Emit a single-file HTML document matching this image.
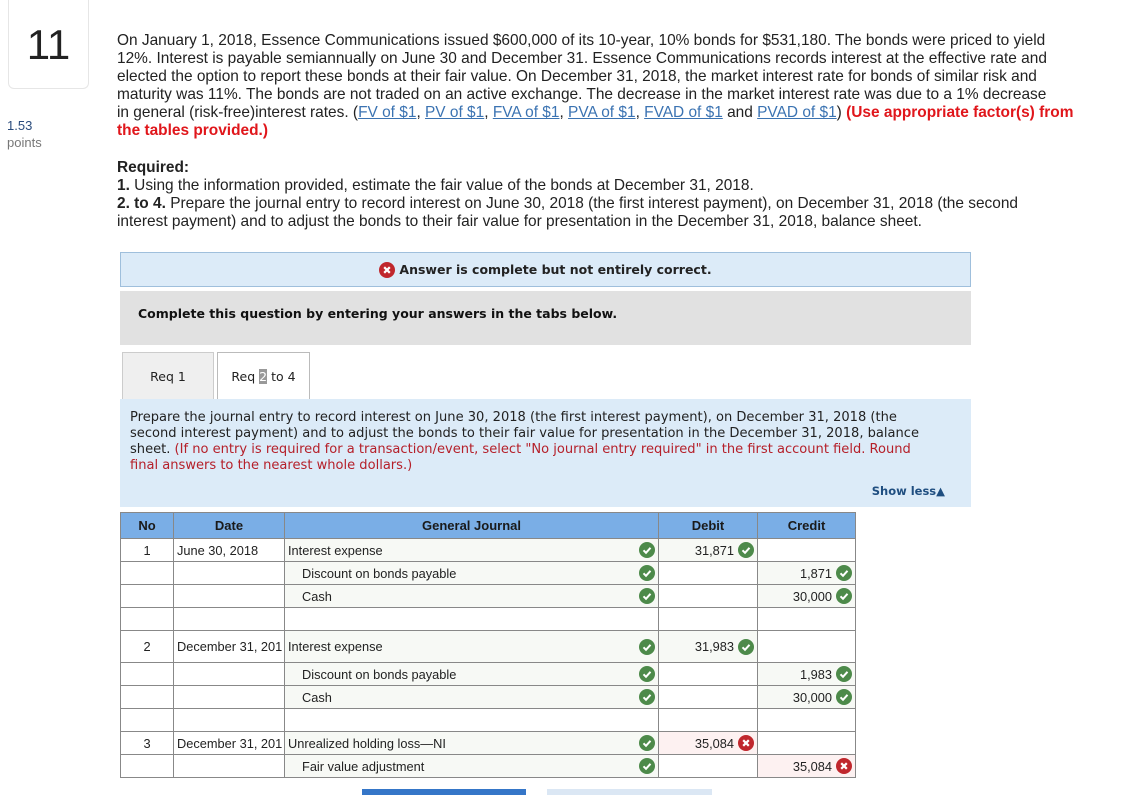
<!DOCTYPE html>
<html><head><meta charset="utf-8"><style>
*{margin:0;padding:0;box-sizing:border-box}
body{width:1145px;height:793px;background:#fff;position:relative;overflow:hidden;font-family:"Liberation Sans",Arial,sans-serif;color:#222}
.abs{position:absolute}
svg{display:block}
.qnum{left:8px;top:0;width:81px;height:89px;border:1px solid #e6e6e6;border-top:none;border-radius:0 0 6px 6px;font-size:42px;text-align:center;line-height:89px;color:#222}
.pts{left:7px;top:117px;font-size:13px;color:#2a4b7c;line-height:17px}
.pts span{color:#777;display:block}
.q{left:117px;top:32px;font-size:15.45px;line-height:18px;white-space:nowrap;color:#222}
.q a{color:#3b73b2;text-decoration:underline}
.red{color:#e0161b;font-weight:bold}
.v{font-family:"DejaVu Sans",Verdana,sans-serif}
.ans{left:120px;top:252px;width:851px;height:35px;background:#dcebf8;border:1px solid #9fbfdc;font-size:12.5px;font-weight:bold;color:#222;display:flex;align-items:center;justify-content:center;gap:4px}
.xi{display:inline-block;width:16px;height:16px;border-radius:50%;background:#c0272d;flex:none}
.ci{display:inline-block;width:16px;height:16px;border-radius:50%;background:#4d8a4a;flex:none}
.gray{left:120px;top:291px;width:851px;height:54px;background:#e1e1e1;font-size:12.5px;font-weight:bold;padding:15px 0 0 18px;color:#111}
.tab{top:352px;height:48px;font-size:12.5px;text-align:center;line-height:48px;color:#222}
.blue{left:120px;top:399px;width:851px;height:108px;background:#dcebf8;font-size:13.05px;line-height:16px;padding:11px 0 0 10px;color:#222;white-space:nowrap}
.blue .r{color:#b5202a}
table{position:absolute;left:120px;top:512px;width:735px;border-collapse:collapse;font-size:12.8px;color:#222;table-layout:fixed}
td,th{border:1px solid #888;padding:0 3px;white-space:nowrap;overflow:hidden}
th{background:#7aaee6;font-weight:bold;height:26px;color:#1a1a1a;font-size:13px}
td{height:23px;background:#fff}
td.c{text-align:center}
td.g{background:#f7f9f5}
td.e{background:#fdf1f1}
.f{display:flex;align-items:center;justify-content:space-between}
.nr{display:flex;align-items:center;justify-content:flex-end;gap:4px}
.ind{padding-left:17px}
</style></head><body>
<div class="abs qnum">11</div>
<div class="abs pts">1.53<span>points</span></div>
<div class="abs q">On January 1, 2018, Essence Communications issued $600,000 of its 10-year, 10% bonds for $531,180. The bonds were priced to yield<br>12%. Interest is payable semiannually on June 30 and December 31. Essence Communications records interest at the effective rate and<br>elected the option to report these bonds at their fair value. On December 31, 2018, the market interest rate for bonds of similar risk and<br>maturity was 11%. The bonds are not traded on an active exchange. The decrease in the market interest rate was due to a 1% decrease<br>in general (risk-free)interest rates. (<a>FV of $1</a>, <a>PV of $1</a>, <a>FVA of $1</a>, <a>PVA of $1</a>, <a>FVAD of $1</a> and <a>PVAD of $1</a>) <span class="red">(Use appropriate factor(s) from<br>the tables provided.)</span><div style="height:19px"></div><b>Required:</b><br><b>1.</b> Using the information provided, estimate the fair value of the bonds at December 31, 2018.<br><b>2. to 4.</b> Prepare the journal entry to record interest on June 30, 2018 (the first interest payment), on December 31, 2018 (the second<br>interest payment) and to adjust the bonds to their fair value for presentation in the December 31, 2018, balance sheet.</div>
<div class="abs ans v"><span class="xi"><svg width="16" height="16"><path d="M5.2 5.2L10.8 10.8M10.8 5.2L5.2 10.8" stroke="#fff" stroke-width="2.2"/></svg></span>Answer is complete but not entirely correct.</div>
<div class="abs gray v">Complete this question by entering your answers in the tabs below.</div>
<div class="abs tab v" style="left:122px;width:92px;background:#efefef;border:1px solid #ccc;border-bottom:none">Req 1</div>
<div class="abs tab v" style="left:217px;width:93px;background:#fff;border:1px solid #bbb;border-bottom:none;height:49px">Req <span style="background:#999;color:#fff">2</span> to 4</div>
<div class="abs blue v">Prepare the journal entry to record interest on June 30, 2018 (the first interest payment), on December 31, 2018 (the<br>second interest payment) and to adjust the bonds to their fair value for presentation in the December 31, 2018, balance<br>sheet. <span class="r">(If no entry is required for a transaction/event, select "No journal entry required" in the first account field. Round<br>final answers to the nearest whole dollars.)</span>
<div style="position:absolute;right:26px;top:84px;font-weight:bold;font-size:11.5px;color:#1f4e80">Show less▲</div></div>
<table>
<colgroup><col style="width:53px"><col style="width:111px"><col style="width:374px"><col style="width:99px"><col style="width:98px"></colgroup>
<tr><th>No</th><th>Date</th><th>General Journal</th><th>Debit</th><th>Credit</th></tr>
<tr><td class="c">1</td><td>June 30, 2018</td><td class="g"><div class="f">Interest expense<span class="ci"><svg width="16" height="16"><path d="M4.5 8.3L7 10.8L11.5 5.8" stroke="#fff" stroke-width="2" fill="none"/></svg></span></div></td><td class="g"><div class="nr">31,871<span class="ci"><svg width="16" height="16"><path d="M4.5 8.3L7 10.8L11.5 5.8" stroke="#fff" stroke-width="2" fill="none"/></svg></span></div></td><td></td></tr>
<tr><td></td><td></td><td class="g ind"><div class="f">Discount on bonds payable<span class="ci"><svg width="16" height="16"><path d="M4.5 8.3L7 10.8L11.5 5.8" stroke="#fff" stroke-width="2" fill="none"/></svg></span></div></td><td></td><td class="g"><div class="nr">1,871<span class="ci"><svg width="16" height="16"><path d="M4.5 8.3L7 10.8L11.5 5.8" stroke="#fff" stroke-width="2" fill="none"/></svg></span></div></td></tr>
<tr><td></td><td></td><td class="g ind"><div class="f">Cash<span class="ci"><svg width="16" height="16"><path d="M4.5 8.3L7 10.8L11.5 5.8" stroke="#fff" stroke-width="2" fill="none"/></svg></span></div></td><td></td><td class="g"><div class="nr">30,000<span class="ci"><svg width="16" height="16"><path d="M4.5 8.3L7 10.8L11.5 5.8" stroke="#fff" stroke-width="2" fill="none"/></svg></span></div></td></tr>
<tr><td></td><td></td><td></td><td></td><td></td></tr>
<tr><td class="c" style="height:32px">2</td><td>December 31, 201</td><td class="g"><div class="f">Interest expense<span class="ci"><svg width="16" height="16"><path d="M4.5 8.3L7 10.8L11.5 5.8" stroke="#fff" stroke-width="2" fill="none"/></svg></span></div></td><td class="g"><div class="nr">31,983<span class="ci"><svg width="16" height="16"><path d="M4.5 8.3L7 10.8L11.5 5.8" stroke="#fff" stroke-width="2" fill="none"/></svg></span></div></td><td></td></tr>
<tr><td></td><td></td><td class="g ind"><div class="f">Discount on bonds payable<span class="ci"><svg width="16" height="16"><path d="M4.5 8.3L7 10.8L11.5 5.8" stroke="#fff" stroke-width="2" fill="none"/></svg></span></div></td><td></td><td class="g"><div class="nr">1,983<span class="ci"><svg width="16" height="16"><path d="M4.5 8.3L7 10.8L11.5 5.8" stroke="#fff" stroke-width="2" fill="none"/></svg></span></div></td></tr>
<tr><td></td><td></td><td class="g ind"><div class="f">Cash<span class="ci"><svg width="16" height="16"><path d="M4.5 8.3L7 10.8L11.5 5.8" stroke="#fff" stroke-width="2" fill="none"/></svg></span></div></td><td></td><td class="g"><div class="nr">30,000<span class="ci"><svg width="16" height="16"><path d="M4.5 8.3L7 10.8L11.5 5.8" stroke="#fff" stroke-width="2" fill="none"/></svg></span></div></td></tr>
<tr><td></td><td></td><td></td><td></td><td></td></tr>
<tr><td class="c">3</td><td>December 31, 201</td><td class="g"><div class="f">Unrealized holding loss—NI<span class="ci"><svg width="16" height="16"><path d="M4.5 8.3L7 10.8L11.5 5.8" stroke="#fff" stroke-width="2" fill="none"/></svg></span></div></td><td class="e"><div class="nr">35,084<span class="xi"><svg width="16" height="16"><path d="M5.2 5.2L10.8 10.8M10.8 5.2L5.2 10.8" stroke="#fff" stroke-width="2.2"/></svg></span></div></td><td></td></tr>
<tr><td></td><td></td><td class="g ind"><div class="f">Fair value adjustment<span class="ci"><svg width="16" height="16"><path d="M4.5 8.3L7 10.8L11.5 5.8" stroke="#fff" stroke-width="2" fill="none"/></svg></span></div></td><td></td><td class="e"><div class="nr">35,084<span class="xi"><svg width="16" height="16"><path d="M5.2 5.2L10.8 10.8M10.8 5.2L5.2 10.8" stroke="#fff" stroke-width="2.2"/></svg></span></div></td></tr>
</table>
<div class="abs" style="left:362px;top:789px;width:164px;height:6px;background:#3576c8"></div>
<div class="abs" style="left:547px;top:789px;width:165px;height:6px;background:#dbe7f4"></div>
</body></html>
